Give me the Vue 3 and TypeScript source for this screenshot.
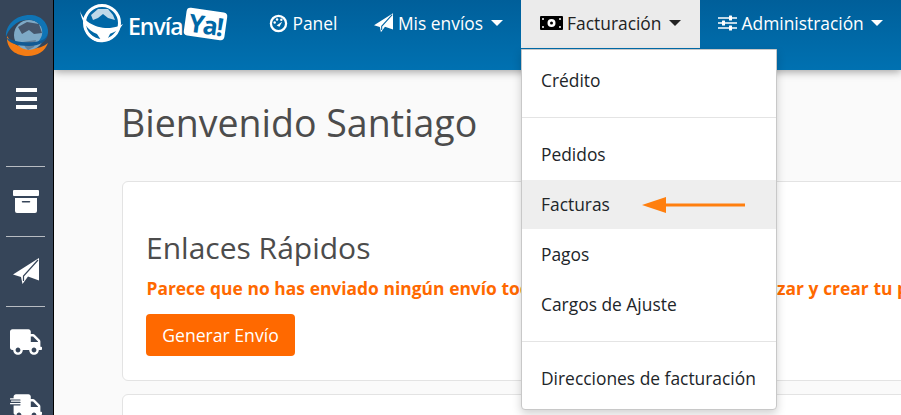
<script setup lang="ts">
const groups: string[][] = [
  ['Crédito'],
  ['Pedidos', 'Facturas', 'Pagos', 'Cargos de Ajuste'],
  ['Direcciones de facturación'],
]
</script>

<template>
  <div class="page">
    <aside class="side">
      <div class="side-top">
        <svg class="side-logo" viewBox="0 0 44 43" width="44" height="43">
          <path d="M2 22 C1 36 12 42 23 42 C33 42 40 37 43 29 C36 35 26 36 17 33 C10 31 5 27 2 22Z" fill="#f57c14" />
          <circle cx="24" cy="21" r="15" fill="#7ea9c6" />
          <path d="M13 13 L22 8 L34 10 L37 19 L29 20 L24 16 L17 20Z" fill="#46566c" />
          <path d="M18 28 L31 26 L29 33 L23 36 L20 33Z" fill="#46566c" opacity=".5" />
          <path d="M1 23 C0 10 12 0 27 1 C36 2 42 8 43 16 C44 24 38 28 30 30 C38 25 39 17 35 11 C29 4 16 4 8 12 C4 16 2 19 1 23Z" fill="#0f74b5" />
          <path d="M1 23 C5 27 18 29 30 28 C37 27 41 25 43 20 C42 28 34 32 24 32 C12 32 3 29 1 23Z" fill="#125a94" />
        </svg>
        <div class="burger"><i></i><i></i><i></i></div>
      </div>
      <div class="side-cell">
        <svg viewBox="0 0 26 23" width="26" height="23">
          <rect x="0" y="0" width="26" height="6" rx="1" fill="#fff" />
          <path fill-rule="evenodd" d="M2 8h22v13a2 2 0 0 1-2 2H4a2 2 0 0 1-2-2zM9.500 11a.75.75 0 0 0 0 1.500h7a.75.75 0 0 0 0-1.500z" fill="#fff" />
        </svg>
      </div>
      <div class="side-cell">
        <svg viewBox="0 0 26 27" width="26" height="27">
          <path fill="#fff" d="M26 0 L0 16.500 L8 19 L9.500 26 L15 18.500 L26 22.500 Z" />
          <path fill="none" stroke="#364559" stroke-width="1.200" d="M25 2 L10.500 18 L10.500 23" />
        </svg>
      </div>
      <div class="side-cell">
        <svg viewBox="0 0 640 512" width="32" height="26">
          <path fill="#fff" d="M624 352h-16V243.900c0-12.700-5.100-24.900-14.100-33.900L494 110.100c-9-9-21.200-14.100-33.900-14.100H416V48c0-26.500-21.500-48-48-48H48C21.500 0 0 21.500 0 48v320c0 26.500 21.500 48 48 48h16c0 53 43 96 96 96s96-43 96-96h128c0 53 43 96 96 96s96-43 96-96h48c8.800 0 16-7.200 16-16v-32c0-8.800-7.200-16-16-16zM160 464c-26.500 0-48-21.500-48-48s21.500-48 48-48 48 21.500 48 48-21.500 48-48 48zm320 0c-26.500 0-48-21.500-48-48s21.500-48 48-48 48 21.500 48 48-21.500 48-48 48zm80-208H416V144h44.100l99.900 99.900V256z" />
        </svg>
      </div>
      <div class="side-last">
        <svg viewBox="0 0 640 512" width="32" height="26">
          <path fill="#fff" d="M624 352h-16V243.900c0-12.700-5.100-24.900-14.100-33.900L494 110.100c-9-9-21.200-14.100-33.900-14.100H416V48c0-26.500-21.500-48-48-48H120c-26.500 0-48 21.500-48 48v32H10a10 10 0 0 0 0 24h190a10 10 0 0 1 0 24H30a10 10 0 0 0 0 24h170a10 10 0 0 1 0 24H10a10 10 0 0 0 0 24h190a10 10 0 0 1 0 24H72v154c0 26.500 21.500 38 48 38h-16c0 53 25 96 78 96s74-43 74-96h128c0 53 43 96 96 96s96-43 96-96h48c8.800 0 16-7.200 16-16v-32c0-8.800-7.200-16-16-16zM180 464c-26.500 0-48-21.500-48-48s21.500-48 48-48 48 21.500 48 48-21.500 48-48 48zm300 0c-26.500 0-48-21.500-48-48s21.500-48 48-48 48 21.500 48 48-21.500 48-48 48zm80-208H416V144h44.100l99.900 99.900V256z" />
        </svg>
      </div>
    </aside>

    <div class="main">
      <header class="top">
        <div class="brand">
          <svg viewBox="0 0 44 42" width="44" height="42">
            <circle cx="22" cy="20" r="17.500" fill="#0067a6" stroke="#fff" stroke-width="3" />
            <path d="M11 12 L18 6 L28 6 L33 12 L35 17 L28 15 L23 11 L18 15 L13 17Z" fill="#fff" opacity=".75" />
            <path d="M4 24 C8 30 14 36 24 39 C14 41 6 33 4 24Z" fill="#fff" />
            <path d="M0 7 C2 18 16 26 30 25 C36 24 40 23 43 21 C38 30 26 33 17 31 C8 28 1 18 0 7Z" fill="#fff" />
            <path d="M17 31 L31 29 L28 35 L24 39 L21 37Z" fill="#fff" />
          </svg>
          <span class="brand-text">Envía</span>
          <span class="brand-ya">Ya!</span>
        </div>
        <nav class="nav">
          <a class="nav-item">
            <svg viewBox="0 0 20 20" width="19" height="19">
              <circle cx="10" cy="10" r="8" fill="none" stroke="#fff" stroke-width="2.400" />
              <circle cx="6" cy="9" r="1.300" fill="#fff" />
              <circle cx="8.500" cy="5.800" r="1.300" fill="#fff" />
              <circle cx="13" cy="6" r="1.300" fill="#fff" />
              <path d="M8 12 L14 8 L11 13.500Z" fill="#fff" />
            </svg>
            Panel
          </a>
          <a class="nav-item caret">
            <svg viewBox="0 0 26 27" width="19" height="20">
              <path fill="#fff" d="M26 0 L0 16.500 L8 19 L9.500 26 L15 18.500 L26 22.500 Z" />
              <path fill="none" stroke="#0065a3" stroke-width="1.400" d="M25 2 L10.500 18 L10.500 23" />
            </svg>
            Mis envíos
          </a>
          <a class="nav-item caret active">
            <svg viewBox="0 0 23 14" width="23" height="14">
              <rect width="23" height="14" rx="1" fill="#000" />
              <circle cx="11.500" cy="7" r="4" fill="#fff" />
              <circle cx="11.500" cy="7" r="1.500" fill="#000" />
              <circle cx="3" cy="3" r="1" fill="#fff" />
              <circle cx="20" cy="3" r="1" fill="#fff" />
              <circle cx="3" cy="11" r="1" fill="#fff" />
              <circle cx="20" cy="11" r="1" fill="#fff" />
            </svg>
            Facturación
          </a>
          <a class="nav-item caret">
            <svg viewBox="0 0 19 16" width="19" height="16">
              <path d="M0 2.200h19v1.600H0zM0 7.200h19v1.600H0zM0 12.200h19v1.600H0z" fill="#fff" />
              <rect x="11" y="0.500" width="3" height="5" rx=".5" fill="#fff" />
              <rect x="4" y="5.500" width="3" height="5" rx=".5" fill="#fff" />
              <rect x="11" y="10.500" width="3" height="5" rx=".5" fill="#fff" />
            </svg>
            Administración
          </a>
        </nav>
      </header>

      <div class="menu">
        <template v-for="(group, g) in groups" :key="g">
          <hr v-if="g > 0" class="sep" />
          <div v-for="item in group" :key="item" class="menu-item" :class="{ hover: item === 'Facturas' }">
            {{ item }}
            <svg v-if="item === 'Facturas'" class="arrow" viewBox="0 0 104 18" width="104" height="18">
              <path d="M0 9 L24 1 L24 7.500 L103 7.500 L103 10.500 L24 10.500 L24 17Z" fill="#ff7f0e" />
            </svg>
          </div>
        </template>
      </div>

      <main class="content">
        <h1 class="title">Bienvenido Santiago</h1>
        <section class="card first">
          <h2 class="card-title">Enlaces Rápidos</h2>
          <p class="notice">Parece que no has enviado ningún envío todavía. Haz clic abajo para cotizar y crear tu primer envío.</p>
          <button class="cta">Generar Envío</button>
        </section>
        <section class="card second"></section>
      </main>
    </div>
  </div>
</template>

<style>
html, body { margin: 0; height: 415px; overflow: hidden; }
</style>

<style scoped>
.page {
  display: flex;
  height: 415px;
  width: 901px;
  overflow: hidden;
  font-family: "Open Sans", sans-serif;
  background: #fafafa;
}
.side {
  width: 53px;
  flex: none;
  background: #364559;
  border-right: 1px solid #000;
  display: flex;
  flex-direction: column;
  z-index: 3;
}
.side-top {
  height: 166px;
  flex: none;
  display: flex;
  flex-direction: column;
  align-items: center;
  padding-top: 14px;
  box-sizing: border-box;
}
.side-logo { margin-left: 1px; }
.burger {
  margin-top: 31px;
  width: 21px;
  display: flex;
  flex-direction: column;
  gap: 4.500px;
}
.burger i { display: block; height: 4px; background: #fff; }
.side-cell {
  height: 70px;
  box-sizing: border-box;
  margin: 0 8px 0 6px;
  border-top: 1px solid #b8bcc2;
  display: flex;
  align-items: center;
  justify-content: center;
  flex: none;
}
.side-last {
  flex: none;
  display: flex;
  justify-content: center;
  padding: 18px 8px 0 6px;
}
.main {
  flex: 1;
  min-width: 0;
  position: relative;
  display: flex;
  flex-direction: column;
  overflow: hidden;
}
.top {
  height: 70px;
  flex: none;
  display: flex;
  background: linear-gradient(to bottom, #005f9a, #0071b1);
  box-shadow: 0 2px 8px rgba(0, 0, 0, .35);
  position: relative;
  z-index: 1;
}
.brand {
  margin: 3px 0 0 26px;
  height: 42px;
  width: 170.500px;
  display: flex;
  align-items: center;
  flex: none;
  color: #fff;
}
.brand-text {
  font-size: 23px;
  font-weight: 600;
  letter-spacing: -1px;
  margin: 3px 0 0 4px;
  width: 57px;
  flex: none;
}
.brand-ya {
  background: #fff;
  color: #0067a6;
  font-size: 25px;
  font-weight: 700;
  line-height: 28px;
  padding: 0 4px;
  margin-top: -1px;
  border-radius: 4px;
  transform: rotate(8deg);
  letter-spacing: -1.500px;
}
.nav {
  display: flex;
  flex: none;
  align-items: flex-start;
}
.nav-item {
  display: flex;
  flex: none;
  align-items: center;
  gap: 4.500px;
  height: 48px;
  box-sizing: border-box;
  padding: 0 18.500px 2px;
  color: #fff;
  font-size: 17.400px;
  white-space: nowrap;
}
.nav-item svg { flex: none; }
.caret::after {
  content: "";
  flex: none;
  margin-left: 3px;
  border-left: 6px solid transparent;
  border-right: 6px solid transparent;
  border-top: 6px solid currentColor;
}
.active { background: #ebebeb; color: #222; }
.menu {
  position: absolute;
  left: 467px;
  top: 49px;
  width: 256px;
  box-sizing: border-box;
  height: 361px;
  background: #fff;
  border: 1px solid #c8c8c8;
  border-radius: 0 0 4px 4px;
  box-shadow: 0 4px 10px rgba(0, 0, 0, .18);
  padding: 6px 0;
  z-index: 2;
}
.menu-item {
  height: 49.800px;
  box-sizing: border-box;
  padding: 0 0 1px 19px;
  display: flex;
  align-items: center;
  font-size: 17.400px;
  color: #212529;
  position: relative;
  white-space: nowrap;
}
.hover { background: #eeeeee; }
.arrow { position: absolute; left: 120px; top: 16px; }
.sep {
  margin: 11px 0 12px;
  border: 0;
  border-top: 1px solid #e4e4e4;
}
.sep:last-of-type { margin-top: 12px; }
.content {
  padding: 0 0 0 68px;
  flex: 1;
}
.title {
  margin: 27px 0 0 -1px;
  font-size: 37.500px;
  line-height: 52px;
  font-weight: 400;
  color: #4c4c4c;
}
.card {
  width: 900px;
  box-sizing: border-box;
  background: #fff;
  border: 1px solid #e3e3e3;
  border-radius: 6px;
}
.first {
  margin-top: 32px;
  height: 200px;
  padding: 46px 24px 0;
}
.second {
  margin-top: 13px;
  height: 100px;
}
.card-title {
  margin: 0 0 0 -1px;
  font-size: 30px;
  line-height: 40px;
  font-weight: 400;
  color: #4c4c4c;
}
.notice {
  margin: 8px 0 0 -.5px;
  font-size: 17.400px;
  line-height: 24px;
  font-weight: 700;
  word-spacing: .2px;
  color: #ff6900;
  white-space: nowrap;
}
.cta {
  display: block;
  margin: 14px 0 0 -1px;
  height: 42px;
  width: 149px;
  border: 0;
  border-radius: 4px;
  background: #ff6900;
  color: #fff;
  font: 400 17.600px "Open Sans", sans-serif;
}
</style>
